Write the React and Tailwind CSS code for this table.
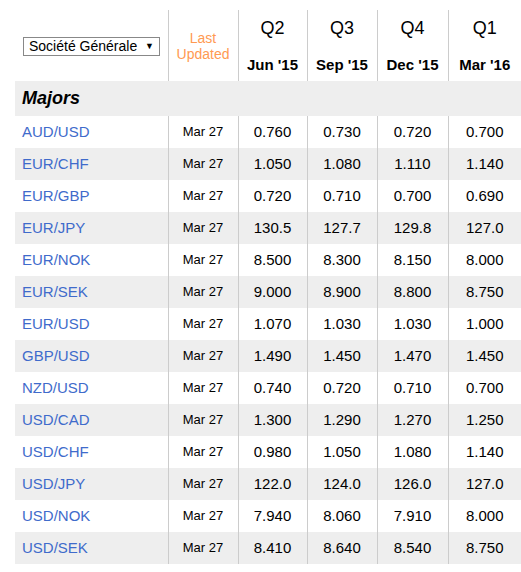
const rows = [
  ["AUD/USD", "0.760", "0.730", "0.720", "0.700"],
  ["EUR/CHF", "1.050", "1.080", "1.110", "1.140"],
  ["EUR/GBP", "0.720", "0.710", "0.700", "0.690"],
  ["EUR/JPY", "130.5", "127.7", "129.8", "127.0"],
  ["EUR/NOK", "8.500", "8.300", "8.150", "8.000"],
  ["EUR/SEK", "9.000", "8.900", "8.800", "8.750"],
  ["EUR/USD", "1.070", "1.030", "1.030", "1.000"],
  ["GBP/USD", "1.490", "1.450", "1.470", "1.450"],
  ["NZD/USD", "0.740", "0.720", "0.710", "0.700"],
  ["USD/CAD", "1.300", "1.290", "1.270", "1.250"],
  ["USD/CHF", "0.980", "1.050", "1.080", "1.140"],
  ["USD/JPY", "122.0", "124.0", "126.0", "127.0"],
  ["USD/NOK", "7.940", "8.060", "7.910", "8.000"],
  ["USD/SEK", "8.410", "8.640", "8.540", "8.750"],
];

const quarters = [
  ["Q2", "Jun '15"],
  ["Q3", "Sep '15"],
  ["Q4", "Dec '15"],
  ["Q1", "Mar '16"],
];

export default function App() {
  return (
    <div
      className="bg-white w-[521px] h-[572px] overflow-hidden pt-[10px] pl-[15px]"
      style={{ fontFamily: '"Liberation Sans", Arial, sans-serif' }}
    >
      <table className="border-collapse table-fixed w-[506px] text-black">
        <colgroup>
          <col className="w-[153px]" />
          <col className="w-[70px]" />
          <col className="w-[69px]" />
          <col className="w-[70px]" />
          <col className="w-[71px]" />
          <col className="w-[73px]" />
        </colgroup>
        <thead>
          <tr className="h-[71px]">
            <th className="p-0 align-middle">
              <div className="ml-[8px] mt-[1px] w-[137px] h-[19px] border border-[#888] flex items-center justify-between pl-[5px] pr-[5px] text-[14px] font-normal leading-none">
                <span>Société Générale</span>
                <span className="text-[9px]">▼</span>
              </div>
            </th>
            <th className="p-0 border-l border-[#ccc] align-middle text-center text-[14px] leading-[16px] font-normal text-[#ff9a52]">
              <div>Last</div>
              <div>Updated</div>
            </th>
            {quarters.map(([q, d]) => (
              <th key={q} className="p-0 border-l border-[#ccc] align-top text-center">
                <div className="pt-[4px] h-[45px] text-[18px] font-normal leading-[28px]">{q}</div>
                <div className="text-[15px] font-bold leading-[20px]">{d}</div>
              </th>
            ))}
          </tr>
        </thead>
        <tbody>
          <tr className="h-[35px] bg-[#eeeeee]">
            <td colSpan={6} className="p-0 pl-[7px] text-[18px] font-bold italic">
              Majors
            </td>
          </tr>
          {rows.map(([pair, ...vals], i) => (
            <tr key={pair} className={`h-[32px] ${i % 2 === 1 ? "bg-[#eeeeee]" : "bg-white"}`}>
              <td className="p-0 pl-[7px] text-[15px] text-[#3f6bcb]">{pair}</td>
              <td className="p-0 border-l border-[#ccc] text-center text-[13px]">Mar 27</td>
              {vals.map((v, j) => (
                <td key={j} className="p-0 border-l border-[#ccc] text-center text-[15px]">
                  {v}
                </td>
              ))}
            </tr>
          ))}
        </tbody>
      </table>
    </div>
  );
}
